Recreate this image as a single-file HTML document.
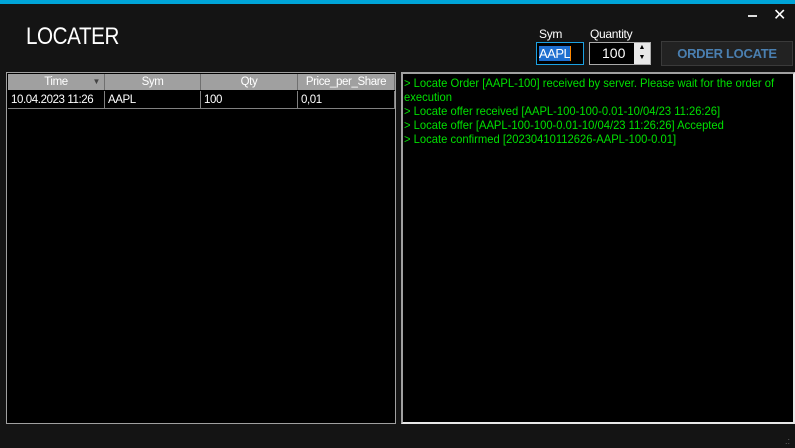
<!DOCTYPE html>
<html><head><meta charset="utf-8"><style>
*{margin:0;padding:0;box-sizing:border-box}
body{width:795px;height:448px;background:#141414;position:relative;overflow:hidden;font-family:"Liberation Sans",sans-serif}
.abs{position:absolute}
.top{left:0;top:0;width:795px;height:4px;background:#00a5d9}
.title{left:26px;top:23px;color:#fff;font-size:24px;letter-spacing:-0.5px;transform:scaleX(0.86);transform-origin:left}
.lbl{color:#fff;font-size:12px;letter-spacing:-0.3px}
.grid{left:6px;top:72px;width:390px;height:352px;background:#000;border:1px solid #a0a0a0}
.hdr{position:absolute;top:1px;height:16px;background:#a0a0a0;color:#fff;font-size:11.5px;letter-spacing:-0.4px;text-align:center;line-height:16px;border-right:1px solid #707070}
.cell{position:absolute;top:18px;height:18px;color:#fff;font-size:11.5px;letter-spacing:-0.4px;line-height:18px;padding-left:3px;border-right:1px solid #808080;border-bottom:1px solid #808080;white-space:nowrap;overflow:hidden}
.log{left:401px;top:72px;width:394px;height:352px;background:#000;border:2px solid #e8e8e8;border-top-color:#a0a0a0;border-left-color:#a0a0a0;color:#00e000;font-size:12px;line-height:14px;padding:2px 0 0 1px;white-space:nowrap}
.log div{transform:scaleX(0.935);transform-origin:left}
</style></head><body>
<div class="abs top"></div>
<div class="abs title">LOCATER</div>
<div class="abs" style="left:748px;top:15px;width:9px;height:2px;background:#ddd"></div>
<div class="abs" style="left:773px;top:5px;color:#fff;font-size:16px">✕</div>
<div class="abs lbl" style="left:539px;top:27px">Sym</div>
<div class="abs lbl" style="left:590px;top:27px">Quantity</div>
<div class="abs" style="left:536px;top:42px;width:48px;height:23px;border:1px solid #1ba1e2;background:#000"><span style="position:absolute;left:2px;top:3px;background:#1e6fd0;color:#fff;font-size:13px;line-height:15px;letter-spacing:-0.5px">AAPL</span><span style="position:absolute;left:33px;top:3px;width:1px;height:15px;background:#f80"></span></div>
<div class="abs" style="left:589px;top:42px;width:62px;height:23px;border:1px solid #aaa;background:#000;color:#fff;font-size:14px;line-height:21px;padding-left:12px">100
<div style="position:absolute;right:0;top:0;width:16px;height:21px;background:#e8e8e8;color:#000;font-size:7px;text-align:center;line-height:10px">▲<br>▼</div></div>
<div class="abs" style="left:661px;top:41px;width:132px;height:25px;background:#222;border:1px solid #3a3a3a;color:#4a7fb0;font-weight:bold;font-size:13px;letter-spacing:-0.3px;text-align:center;line-height:23px">ORDER LOCATE</div>
<div class="abs grid">
<div class="hdr" style="left:1px;width:97px">Time<span style="position:absolute;right:4px;top:0;font-size:8px;color:#444">▼</span></div>
<div class="hdr" style="left:98px;width:96px">Sym</div>
<div class="hdr" style="left:194px;width:97px">Qty</div>
<div class="hdr" style="left:291px;width:97px">Price_per_Share</div>
<div class="cell" style="left:1px;width:97px">10.04.2023 11:26</div>
<div class="cell" style="left:98px;width:96px">AAPL</div>
<div class="cell" style="left:194px;width:97px">100</div>
<div class="cell" style="left:291px;width:97px">0,01</div>
</div>
<div class="abs log"><div>&gt; Locate Order [AAPL-100] received by server. Please wait for the order of</div><div>execution</div><div>&gt; Locate offer received [AAPL-100-100-0.01-10/04/23 11:26:26]</div><div>&gt; Locate offer [AAPL-100-100-0.01-10/04/23 11:26:26] Accepted</div><div>&gt; Locate confirmed [20230410112626-AAPL-100-0.01]</div></div>
<div class="abs" style="left:785px;top:436px;color:#666;font-size:9px">.:</div>
</body></html>
